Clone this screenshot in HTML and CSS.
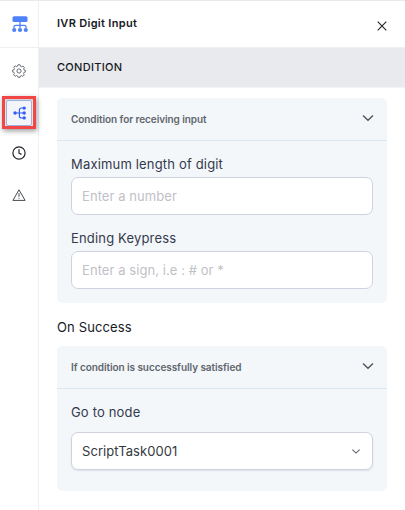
FILE: index.html
```html
<!DOCTYPE html>
<html lang="en">
<head>
<meta charset="utf-8">
<title>IVR Digit Input</title>
<link rel="stylesheet" href="styles.css">
</head>
<body>
<div class="panel">
  <nav class="rail">
    <div class="brand">
      <svg width="16" height="17" viewBox="0 0 16 17" fill="#4d82fa"><rect x="0.5" y="0.3" width="15" height="5.7" rx="1.6"/><path d="M8 6v6M2 12v-1.2q0-1.5 1.5-1.5h9q1.5 0 1.5 1.5V12" fill="none" stroke="#4d82fa" stroke-width="1.3"/><circle cx="2.2" cy="14" r="2.1"/><circle cx="8" cy="14" r="2.1"/><circle cx="13.8" cy="14" r="2.1"/></svg>
    </div>
    <button class="tab" aria-label="Settings">
      <svg width="14" height="14" viewBox="0 0 14 14" fill="none" stroke="#6b7077" stroke-width="1"><path d="M5.9.8h2.2l.4 1.6 1 .4L11 2l1.4 1.5-.8 1.4.4 1 1.3.3v1.9l-1.4.4-.4 1 .8 1.4-1.5 1.5-1.4-.8-1 .4-.4 1.3H6l-.5-1.4-1-.4-1.4.8-1.5-1.5.8-1.4-.4-1L.7 8V6l1.4-.4.4-1-.8-1.4L3.1 1.8l1.4.8 1-.4z" stroke-linejoin="round"/><circle cx="7" cy="7" r="2.1"/></svg>
    </button>
    <div class="marked">
      <button class="tab active" aria-label="Condition">
        <svg width="14" height="14" viewBox="0 0 14 14"><path d="M2 7h9M11 2H8.6Q6.4 2 6.4 4v6q0 2 2.2 2H11" fill="none" stroke="#315efb" stroke-width="1.2"/><g fill="#315efb"><circle cx="2" cy="7" r="1.7"/><circle cx="11.2" cy="2.1" r="1.7"/><circle cx="11.2" cy="7" r="1.7"/><circle cx="11.2" cy="11.9" r="1.7"/></g></svg>
      </button>
    </div>
    <button class="tab" aria-label="Schedule">
      <svg width="14" height="14" viewBox="0 0 14 14" fill="none" stroke="#20242b" stroke-width="1.2"><circle cx="7" cy="7" r="6.1"/><path d="M7 3.2v4l2.5 1.2"/></svg>
    </button>
    <button class="tab" aria-label="Warnings">
      <svg width="14" height="14" viewBox="0 0 14 14" fill="none" stroke="#454a50" stroke-width="1" stroke-linejoin="round"><path d="M7 1.8 13.1 12.4H.9zM7 5.2v3.6M7 9.8v1"/></svg>
    </button>
  </nav>
  <main class="content">
    <header class="titlebar">
      <h1>IVR Digit Input</h1>
      <button class="close" aria-label="Close"><svg width="10" height="10" viewBox="0 0 10 10"><path d="M.7.7l8.6 8.6M9.3.7.7 9.3" stroke="#222" stroke-width="1.1"/></svg></button>
    </header>
    <h2 class="section">CONDITION</h2>
    <section class="card">
      <div class="card-head"><span>Condition for receiving input</span><svg width="12" height="8" viewBox="0 0 12 8"><path d="m1 1.5 5 4.7 5-4.7" fill="none" stroke="#50555b" stroke-width="1.4"/></svg></div>
      <div class="card-body">
        <label for="length" class="length">Maximum length of digit</label>
        <input id="length" class="field" placeholder="Enter a number">
        <label for="key" class="key">Ending Keypress</label>
        <input id="key" class="field" placeholder="Enter a sign, i.e : # or *">
      </div>
    </section>
    <h3>On Success</h3>
    <section class="card success">
      <div class="card-head"><span>If condition is successfully satisfied</span><svg width="12" height="8" viewBox="0 0 12 8"><path d="m1 1.5 5 4.7 5-4.7" fill="none" stroke="#50555b" stroke-width="1.4"/></svg></div>
      <div class="card-body">
        <span class="label">Go to node</span>
        <div class="field select"><span>ScriptTask0001</span><svg width="8" height="5" viewBox="0 0 8 5"><path d="m.4.6 3.6 3.5L7.6.6" fill="none" stroke="#59616c" stroke-width="1.1"/></svg></div>
      </div>
    </section>
  </main>
</div>
</body>
</html>
```
FILE: styles.css
```css
* { box-sizing: border-box; }
body { margin: 0; background: #fff; font-family: Inter, "Liberation Sans", sans-serif; }
h1, h2, h3 { margin: 0; }
button { padding: 0; border: 0; background: none; }
svg { display: block; flex: none; }
.panel { display: flex; width: 405px; height: 510px; border-top: 1px solid #e9eaee; overflow: hidden; }
.rail { width: 39px; flex: none; border-right: 1px solid #eff0f3; display: flex; flex-direction: column; align-items: center; }
.brand { width: 100%; height: 47px; flex: none; border-bottom: 1px solid #eff0f3; display: flex; justify-content: center; padding: 15px 0 0 1px; margin-bottom: 10px; }
.tab { width: 26px; height: 26px; margin: 0 0 16px; display: flex; align-items: center; justify-content: center; }
.marked { width: 34px; height: 33px; margin: -4px 0 11px; border: 3px solid #f24545; display: flex; align-items: center; justify-content: center; box-shadow: 1px 2px 5px rgba(0,0,0,.4), inset 0 1px 3px rgba(0,0,0,.25); }
.active { margin: 0; background: #f3f5fb; border: 1px solid #9fb1dc; border-radius: 2px; }
.active svg { margin-left: 1px; }
.content { flex: 1; }
.titlebar { height: 47px; border-bottom: 1px solid #f0f1f3; display: flex; justify-content: space-between; padding: 0 18px; }
h1 { font-size: 11px; line-height: 14px; font-weight: 600; letter-spacing: .31px; color: #16191f; padding-top: 15px; }
.close { height: 10px; margin-top: 20px; }
.section { height: 40px; background: #e9eaee; border-bottom: 1px solid #f2f3f5; padding-left: 18px; font-size: 11px; line-height: 38px; font-weight: 450; letter-spacing: .3px; color: #16191f; }
.card { margin: 10px 18px 0; height: 205px; border-radius: 5px; background: #f3f7fa; }
.card-head { height: 43px; border-bottom: 1px solid #dae7f1; padding: 0 13.5px 0 14px; display: flex; justify-content: space-between; font-size: 10px; line-height: 43px; font-weight: 600; letter-spacing: -.07px; color: #61656d; }
.card-head svg { margin-top: 16px; }
.card-body { padding: 0 14px; display: flex; flex-direction: column; }
label, .label { font-size: 13px; line-height: 18px; letter-spacing: .17px; color: #343a4d; }
.length { margin-top: 14px; }
.key { margin-top: 14px; }
.field { width: 302px; height: 38px; margin-top: 4px; padding: 0 10px; border: 1px solid #d0d3de; border-radius: 7px; background: #fff; font: 13px Inter, sans-serif; letter-spacing: .07px; color: #343a40; }
.field::placeholder { color: #bfc1c6; opacity: 1; }
h3 { margin: 15px 0 0 18px; font-size: 13px; line-height: 18px; font-weight: 400; letter-spacing: .13px; color: #16191f; }
.success { margin-top: 10px; height: 145px; }
.label { margin-top: 14px; }
.select { margin-top: 11px; display: flex; align-items: center; justify-content: space-between; padding-right: 12px; box-shadow: 0 1px 2px rgba(30,40,70,.1); }
```
